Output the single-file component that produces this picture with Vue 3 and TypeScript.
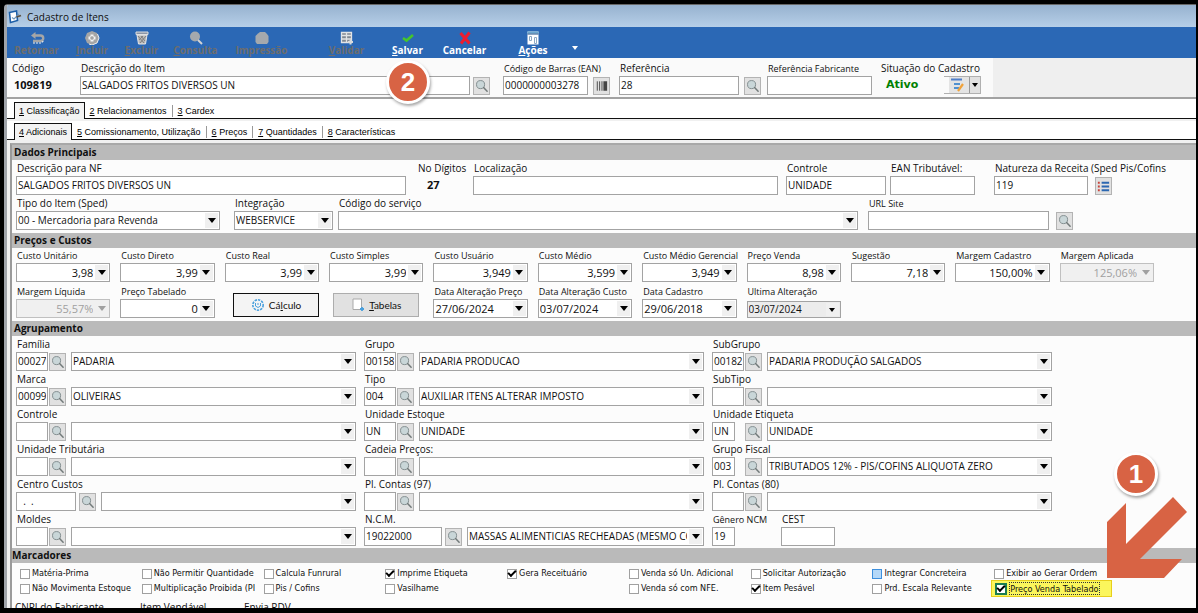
<script setup lang="ts">
import { ref } from 'vue'

interface PriceField {
  id: string
  label: string
  value: string
  disabled?: boolean
  date?: boolean
}

interface GroupField {
  id: string
  label: string
  code: string
  name: string
  size?: 'medium' | 'long' | 'short'
}

interface Flag {
  id: string
  label: string
  checked?: boolean
  tinted?: boolean
  marked?: boolean
}

const prices: PriceField[] = [
  { id: 'custo-unitario', label: 'Custo Unitário', value: '3,98' },
  { id: 'custo-direto', label: 'Custo Direto', value: '3,99' },
  { id: 'custo-real', label: 'Custo Real', value: '3,99' },
  { id: 'custo-simples', label: 'Custo Simples', value: '3,99' },
  { id: 'custo-usuario', label: 'Custo Usuário', value: '3,949' },
  { id: 'custo-medio', label: 'Custo Médio', value: '3,599' },
  { id: 'custo-gerencial', label: 'Custo Médio Gerencial', value: '3,949' },
  { id: 'preco-venda', label: 'Preço Venda', value: '8,98' },
  { id: 'sugestao', label: 'Sugestão', value: '7,18' },
  { id: 'margem-cadastro', label: 'Margem Cadastro', value: '150,00%' },
  { id: 'margem-aplicada', label: 'Margem Aplicada', value: '125,06%', disabled: true },
]

const margins: PriceField[] = [
  { id: 'margem-liquida', label: 'Margem Líquida', value: '55,57%', disabled: true },
  { id: 'preco-tabelado', label: 'Preço Tabelado', value: '0' },
]

const dates: PriceField[] = [
  { id: 'data-preco', label: 'Data Alteração Preço', value: '27/06/2024', date: true },
  { id: 'data-custo', label: 'Data Alteração Custo', value: '03/07/2024', date: true },
  { id: 'data-cadastro', label: 'Data Cadastro', value: '29/06/2018', date: true },
]

const groups: GroupField[] = [
  { id: 'familia', label: 'Família', code: '00027', name: 'PADARIA' },
  { id: 'grupo', label: 'Grupo', code: '00158', name: 'PADARIA PRODUCAO' },
  { id: 'subgrupo', label: 'SubGrupo', code: '00182', name: 'PADARIA PRODUÇÃO SALGADOS' },
  { id: 'marca', label: 'Marca', code: '00099', name: 'OLIVEIRAS' },
  { id: 'tipo', label: 'Tipo', code: '004', name: 'AUXILIAR ITENS ALTERAR IMPOSTO' },
  { id: 'subtipo', label: 'SubTipo', code: '', name: '' },
  { id: 'controle-grupo', label: 'Controle', code: '', name: '' },
  { id: 'un-estoque', label: 'Unidade Estoque', code: 'UN', name: 'UNIDADE' },
  { id: 'un-etiqueta', label: 'Unidade Etiqueta', code: 'UN', name: 'UNIDADE', size: 'short' },
  { id: 'un-tributaria', label: 'Unidade Tributária', code: '', name: '' },
  { id: 'cadeia', label: 'Cadeia Preços:', code: '', name: '' },
  { id: 'grupo-fiscal', label: 'Grupo Fiscal', code: '003', name: 'TRIBUTADOS 12% - PIS/COFINS ALIQUOTA ZERO', size: 'short' },
  { id: 'centro-custos', label: 'Centro Custos', code: '  .  .', name: '', size: 'medium' },
  { id: 'contas-97', label: 'Pl. Contas (97)', code: '', name: '' },
  { id: 'contas-80', label: 'Pl. Contas (80)', code: '', name: '' },
  { id: 'moldes', label: 'Moldes', code: '', name: '' },
  { id: 'ncm', label: 'N.C.M.', code: '19022000', name: 'MASSAS ALIMENTICIAS RECHEADAS (MESMO COZIDAS)', size: 'long' },
]

const flags = ref<Flag[]>([
  { id: 'f1', label: 'Matéria-Prima' },
  { id: 'f2', label: 'Não Permitir Quantidade' },
  { id: 'f3', label: 'Calcula Funrural' },
  { id: 'f4', label: 'Imprime Etiqueta', checked: true },
  { id: 'f5', label: 'Gera Receituário', checked: true },
  { id: 'f6', label: 'Venda só Un. Adicional' },
  { id: 'f7', label: 'Solicitar Autorização' },
  { id: 'f8', label: 'Integrar Concreteira', tinted: true },
  { id: 'f9', label: 'Exibir ao Gerar Ordem' },
  { id: 'f10', label: 'Não Movimenta Estoque' },
  { id: 'f11', label: 'Multiplicação Proibida (PI' },
  { id: 'f12', label: 'Pis / Cofins' },
  { id: 'f13', label: 'Vasilhame' },
])

const flagsTail = ref<Flag[]>([
  { id: 'f14', label: 'Venda só com NFE.' },
  { id: 'f15', label: 'Item Pesável', checked: true },
  { id: 'f16', label: 'Prd. Escala Relevante' },
  { id: 'f17', label: 'Preço Venda Tabelado', checked: true, marked: true },
])
</script>

<template>
  <div class="screen">
    <svg class="sprite" aria-hidden="true">
      <symbol id="lens" viewBox="0 0 16 16">
        <circle cx="7" cy="6.5" r="4.3" fill="#c9d6d8" stroke="#7f8a8c" />
        <path d="M10.2 9.7 14 13.6" stroke="#727a7a" stroke-width="1.6" stroke-linecap="round" />
      </symbol>
    </svg>

    <div class="window">
      <header class="titlebar">
        <svg class="app-icon" viewBox="0 0 14 14">
          <path d="M1.5 2.5 8.5 1l1 9.5-7 2z" fill="#fff" stroke="#1d5fa8" stroke-width="1.6" />
          <path d="M4 7.5 6 9l5-5" fill="none" stroke="#6f97bd" stroke-width="1.2" />
          <path d="M8.5 7 13 5.5" stroke="#5c5142" stroke-width="1.8" />
        </svg>
        <h1>Cadastro de Itens</h1>
      </header>

      <nav class="toolbar">
        <button class="tool w-retornar" disabled>
          <svg viewBox="0 0 16 14"><path d="M4 4.500h7.500a2.600 2.600 0 0 1 0 5.500H4" fill="none" stroke="#a6a6a6" stroke-width="2.400" /><path d="M6.500 1 2 4.500 6.500 8z" fill="#a6a6a6" /><path d="M4 12h8l2.500-2" fill="none" stroke="#f0f0f0" stroke-width="1.200" stroke-dasharray="2 1" /></svg>
          <span>Retornar</span>
        </button>
        <button class="tool w-incluir" disabled>
          <svg viewBox="0 0 16 14"><path d="M8 0 13 2l2 5-2 5-5 2-5-2-2-5 2-5z" fill="#a6a6a6" /><path d="M13.500 3 15 7l-2 5-5 2-3-1" fill="none" stroke="#eee" /><path d="M8 3.500v7M4.500 7h7" stroke="#f4f4f4" stroke-width="3" /><path d="M8 5v4M6 7h4" stroke="#8a8a8a" /></svg>
          <span><u>I</u>ncluir</span>
        </button>
        <button class="tool w-excluir" disabled>
          <svg viewBox="0 0 16 14"><path d="M2 1h12v2.500H2z" fill="#8a96a8" stroke="#dcdcdc" /><path d="M3 4h10l-1.500 9h-7z" fill="#b9b9b9" stroke="#e6e6e6" /><path d="m4 5 6 7M7 5l4 5M12 5l-6 7M9 5l-4 4" stroke="#808080" /></svg>
          <span><u>E</u>xcluir</span>
        </button>
        <button class="tool w-consulta" disabled>
          <svg viewBox="0 0 16 14"><circle cx="7" cy="5.500" r="5" fill="#a5a9ad" /><path d="m10 9 4 4" stroke="#d2d4d6" stroke-width="2" /></svg>
          <span><u>C</u>onsulta</span>
        </button>
        <button class="tool w-impressao" disabled>
          <svg viewBox="0 0 16 14"><path d="M4 2.500 6 1h5l2 2 1.500 2v6L13 13H3l-1.500-2V5z" fill="#a5a9ad" /></svg>
          <span>Impressão</span>
        </button>
        <span class="tool-gap" />
        <button class="tool w-validar" disabled>
          <svg viewBox="0 0 16 14"><path d="M2.500 1.500h10v10h-10zM7.500 1v10M3 4.500h9M3 8h9" fill="#808992" stroke="#e2e4e6" stroke-width="1.300" /><path d="M11.500 8.500v5M9 11h5" stroke="#d8dadc" stroke-width="2" /></svg>
          <span><u>V</u>alidar</span>
        </button>
        <button class="tool w-salvar">
          <svg viewBox="0 0 16 14"><path d="M3 7 6.500 9.500 13 4" fill="none" stroke="#45c62b" stroke-width="2.600" /></svg>
          <span><u>S</u>alvar</span>
        </button>
        <button class="tool w-cancelar">
          <svg viewBox="0 0 16 14"><path d="m3.500 2 9 10.500M12.500 1.500 4 12.500" stroke="#ee1c2e" stroke-width="3" /></svg>
          <span>Cancelar</span>
        </button>
        <button class="tool w-acoes">
          <svg viewBox="0 0 16 14"><path d="M2.500.5h11v13h-11z" fill="#fff" /><path d="M2.500.5h11v2h-11z" fill="#6aa7cf" /><path d="M2.500 3h11" stroke="#1a4d86" /><path d="M4.500 5.500h2v4h-2zM9.500 6.500h2v6h-2z" fill="#fff" stroke="#8da9c4" /></svg>
          <span><u>A</u>ções</span>
        </button>
        <button class="tool-more" aria-label="Mais ações"><span class="tri light" /></button>
      </nav>

      <section class="head">
        <div class="head-main">
          <div class="field w-code">
            <span class="caption">Código</span>
            <output class="strong">109819</output>
          </div>
          <div class="field grow">
            <label for="descricao">Descrição do Item</label>
            <div class="line">
              <input id="descricao" class="box grow" value="SALGADOS FRITOS DIVERSOS UN">
              <button class="icon-btn" aria-label="Pesquisar descrição"><svg><use href="#lens" /></svg></button>
            </div>
          </div>
          <div class="field small w-ean">
            <label for="ean">Código de Barras (EAN)</label>
            <div class="line wide-gap">
              <input id="ean" class="box grow" value="0000000003278">
              <button class="icon-btn" aria-label="Código de barras">
                <svg viewBox="0 0 16 16"><path d="M3.500 3v10M6 3v10" stroke="#444" /><path d="M8 3h1v10H8zM10 3h4v10h-4z" fill="#444" /></svg>
              </button>
            </div>
          </div>
          <div class="field w-ref">
            <label for="referencia">Referência</label>
            <div class="line wide-gap">
              <input id="referencia" class="box grow" value="28">
              <button class="icon-btn" aria-label="Pesquisar referência"><svg><use href="#lens" /></svg></button>
            </div>
          </div>
          <div class="field small w-fab">
            <label for="fabricante">Referência Fabricante</label>
            <input id="fabricante" class="box" value="">
          </div>
          <div class="field w-status">
            <span class="caption">Situação do Cadastro</span>
            <div class="line status">
              <output class="active">Ativo</output>
              <div class="split">
                <button class="split-main" aria-label="Alterar situação">
                  <svg viewBox="0 0 22 16"><path d="M5 2.500h11" stroke="#4f7fc9" stroke-width="2" /><path d="M8 7h6M8 11h5" stroke="#2176c9" stroke-width="1.600" /><path d="m12 14 5-7" stroke="#f0a23a" stroke-width="2.200" /></svg>
                </button>
                <button class="split-drop" aria-label="Opções de situação"><span class="tri small-tri" /></button>
              </div>
            </div>
          </div>
        </div>
      </section>

      <nav class="tabs">
        <a href="#" class="tab on"><u>1</u> Classificação</a>
        <a href="#" class="tab"><u>2</u> Relacionamentos</a>
        <a href="#" class="tab"><u>3</u> Cardex</a>
      </nav>
      <nav class="tabs second">
        <a href="#" class="tab on"><u>4</u> Adicionais</a>
        <a href="#" class="tab"><u>5</u> Comissionamento, Utilização</a>
        <a href="#" class="tab"><u>6</u> Preços</a>
        <a href="#" class="tab"><u>7</u> Quantidades</a>
        <a href="#" class="tab"><u>8</u> Características</a>
      </nav>

      <main class="panel">
        <h2>Dados Principais</h2>
        <section class="block top-pad">
          <div class="row">
            <div class="field f-nf">
              <label for="nf">Descrição para NF</label>
              <input id="nf" class="box" value="SALGADOS FRITOS DIVERSOS UN">
            </div>
            <div class="field f-digits">
              <span class="caption">No Dígitos</span>
              <output class="strong digits">27</output>
            </div>
            <div class="field f-local">
              <label for="local">Localização</label>
              <input id="local" class="box" value="">
            </div>
            <div class="field f-controle">
              <label for="controle">Controle</label>
              <input id="controle" class="box" value="UNIDADE">
            </div>
            <div class="field f-ean">
              <label for="ean-trib">EAN Tributável:</label>
              <input id="ean-trib" class="box" value="">
            </div>
            <div class="field f-natureza">
              <label for="natureza">Natureza da Receita (Sped Pis/Cofins</label>
              <div class="line list-gap">
                <input id="natureza" class="box w-nat" value="119">
                <button class="icon-btn" aria-label="Listar naturezas">
                  <svg viewBox="0 0 16 16"><path d="M2 4.500h2M2 8.500h2M2 12.500h2" stroke="#c8433a" stroke-width="2" /><path d="M6 4.500h8M6 8.500h8M6 12.500h8" stroke="#2b67b1" stroke-width="2" /></svg>
                </button>
              </div>
            </div>
          </div>
          <div class="row">
            <div class="field f-sped">
              <label for="sped">Tipo do Item (Sped)</label>
              <div class="combo"><select id="sped"><option>00 - Mercadoria para Revenda</option></select><span class="arrow"><i class="tri" /></span></div>
            </div>
            <div class="field f-integra">
              <label for="integra">Integração</label>
              <div class="combo"><select id="integra"><option>WEBSERVICE</option></select><span class="arrow"><i class="tri" /></span></div>
            </div>
            <div class="field f-servico">
              <label for="servico">Código do serviço</label>
              <div class="combo"><select id="servico"><option></option></select><span class="arrow"><i class="tri" /></span></div>
            </div>
            <div class="field small f-url">
              <label for="url">URL Site</label>
              <div class="line list-gap">
                <input id="url" class="box grow" value="">
                <button class="icon-btn" aria-label="Abrir site"><svg><use href="#lens" /></svg></button>
              </div>
            </div>
          </div>
        </section>

        <h2>Preços e Custos</h2>
        <section class="block prices">
          <div v-for="p in [...prices, ...margins]" :key="p.id" class="field small" :class="{ off: p.disabled }">
            <label :for="p.id">{{ p.label }}</label>
            <div class="combo">
              <input :id="p.id" class="num" :value="p.value" :disabled="p.disabled">
              <button class="arrow" :disabled="p.disabled" :aria-label="p.label"><i class="tri" /></button>
            </div>
          </div>
          <button class="action focus">
            <svg viewBox="0 0 14 14"><circle cx="7" cy="7" r="5.200" fill="none" stroke="#4aa0dd" stroke-width="1.600" stroke-dasharray="2.400 1" /><path d="M4.500 5v3l2.500 1.500L9.500 8V5M7 5v2" fill="none" stroke="#4aa0dd" /></svg>
            <span>Cá<u>l</u>culo</span>
          </button>
          <button class="action">
            <svg viewBox="0 0 14 14"><path d="M2 1h8.500v10.500H2z" fill="#fff" stroke="#a9a9a9" /><path d="M11 9v4M9 11h4" stroke="#4aa0dd" stroke-width="1.800" /></svg>
            <span><u>T</u>abelas</span>
          </button>
          <div v-for="p in dates" :key="p.id" class="field small">
            <label :for="p.id">{{ p.label }}</label>
            <div class="combo">
              <input :id="p.id" class="date" :value="p.value">
              <button class="arrow" :aria-label="p.label"><i class="tri" /></button>
            </div>
          </div>
          <div class="field small last-change">
            <label for="ultima">Ultima Alteração</label>
            <div class="combo grey"><select id="ultima"><option>03/07/2024</option></select><span class="arrow"><i class="tri small-tri" /></span></div>
          </div>
        </section>

        <h2>Agrupamento</h2>
        <section class="block groups">
          <div v-for="g in groups" :key="g.id" class="field" :class="g.size">
            <label :for="g.id">{{ g.label }}</label>
            <div class="lookup">
              <div class="slot"><input :id="g.id" class="box code" :value="g.code"></div>
              <button class="icon-btn" :aria-label="'Pesquisar ' + g.label"><svg><use href="#lens" /></svg></button>
              <div class="combo"><select :aria-label="g.label"><option>{{ g.name }}</option></select><span class="arrow"><i class="tri" /></span></div>
            </div>
          </div>
          <div class="pair">
            <div class="field small f-genero">
              <label for="genero">Gênero NCM</label>
              <input id="genero" class="box" value="19">
            </div>
            <div class="field f-cest">
              <label for="cest">CEST</label>
              <input id="cest" class="box" value="">
            </div>
          </div>
        </section>

        <h2 class="tight">Marcadores</h2>
        <section class="flags">
          <label v-for="f in flags" :key="f.id" class="flag" :class="{ tinted: f.tinted }">
            <input v-model="f.checked" type="checkbox">
            <span>{{ f.label }}</span>
          </label>
          <span />
          <label v-for="f in flagsTail" :key="f.id" class="flag" :class="{ marked: f.marked }">
            <input v-model="f.checked" type="checkbox">
            <span>{{ f.label }}</span>
          </label>
        </section>
        <div class="more">
          <span>CNPJ do Fabricante</span>
          <span>Item Vendável</span>
          <span>Envia PDV</span>
        </div>
      </main>
    </div>

    <div class="badge two">2</div>
    <div class="badge one">1</div>
    <svg class="pointer" viewBox="0 0 80 82"><path d="M0 25 19 6v41L66 0l14 15-47 47h42L57 81H0z" fill="#d86344" /></svg>
  </div>
</template>

<style>
html,
body,
#app {
  height: 100%;
}
body {
  background: #000;
  overflow: hidden;
}
</style>

<style scoped>
* {
  box-sizing: border-box;
}
.screen {
  position: relative;
  display: flex;
  height: 100%;
  padding: 4px 2px 5px 4px;
  background: #000;
  font-family: "Open Sans", "Noto Sans", sans-serif;
  font-size: 10px;
  line-height: 15px;
  color: #101010;
}
.sprite {
  position: absolute;
  width: 0;
  height: 0;
}
.window {
  flex: 1;
  min-width: 0;
  display: flex;
  flex-direction: column;
  overflow: hidden;
  border-top: 1px solid #666;
  border-left: 3px solid #a0a4aa;
  border-top-left-radius: 4px;
  background: #f0f0f0;
}
button {
  font: inherit;
  color: inherit;
  padding: 0;
  margin: 0;
}
input,
select {
  font: inherit;
  color: inherit;
  margin: 0;
  min-width: 0;
}
.titlebar {
  flex: none;
  height: 22px;
  display: flex;
  align-items: center;
  gap: 5px;
  padding: 2px 1px 0;
  background: linear-gradient(#97b2cf, #b6cfe8);
}
.app-icon {
  width: 14px;
  height: 14px;
}
h1 {
  margin: 0;
  font-size: 10px;
  font-weight: 400;
}
.toolbar {
  flex: none;
  height: 31px;
  display: flex;
  background: #2b68b5;
}
.tool {
  display: flex;
  flex-direction: column;
  align-items: center;
  border: 0;
  padding-top: 4px;
  background: none;
  color: #fff;
  font-weight: 700;
  font-size: 10px;
}
.tool svg {
  width: 16px;
  height: 14px;
  flex: none;
}
.tool span {
  line-height: 11px;
}
.tool:disabled {
  color: #6d6d6d;
}
.w-retornar { width: 59px; }
.w-incluir { width: 52px; }
.w-excluir { width: 47px; }
.w-consulta { width: 61px; }
.w-impressao { width: 71px; }
.tool-gap { width: 23px; }
.w-validar { width: 53px; margin-right: 8px; }
.w-salvar { width: 53px; }
.w-cancelar { width: 61px; margin-right: 12px; }
.w-acoes { width: 52px; }
.tool-more {
  width: 32px;
  border: 0;
  padding-top: 10px;
  background: none;
  display: grid;
  place-items: center;
}
.tri {
  display: block;
  width: 0;
  height: 0;
  border: 4px solid transparent;
  border-top: 5px solid #000;
  border-bottom: 0;
}
.tri.small-tri {
  border-width: 4px 3px 0;
}
.tri.light {
  border-width: 4px 3px 0;
  border-top-color: #fff;
}
.head {
  flex: none;
  height: 41px;
  border-bottom: 2px solid #a2a2a2;
  background: #efefef;
}
.head-main {
  display: flex;
  height: 100%;
  margin-right: 203px;
  padding: 3px 12px 0 4px;
  background: #fafafa;
}
.field {
  display: flex;
  flex-direction: column;
  min-width: 0;
}
.field > label,
.caption {
  height: 15px;
  padding-left: 1px;
  white-space: nowrap;
}
.field.small > label {
  font-size: 9px;
}
.grow {
  flex: 1;
}
.line {
  display: flex;
  align-items: center;
  gap: 3px;
}
.wide-gap {
  gap: 5px;
}
.list-gap {
  gap: 7px;
}
.box {
  height: 19px;
  width: 100%;
  padding: 0 1px 2px;
  border: 1px solid #a3a3a3;
  border-radius: 0;
  background: #fff;
}
.icon-btn {
  flex: none;
  width: 17px;
  height: 18px;
  border: 1px solid #b3b3b3;
  background: #e1e1e1;
  display: grid;
  place-items: center;
}
.icon-btn svg {
  width: 15px;
  height: 16px;
}
.strong {
  font-size: 11px;
  font-weight: 700;
  line-height: 18px;
  padding-left: 3px;
}
.w-code { width: 69px; }
.w-ean { width: 107px; margin: 0 9px 0 13px; }
.w-ref { width: 142px; margin-right: 6px; }
.w-fab { width: 105px; margin-right: 8px; }
.w-status { width: 101px; }
.status {
  justify-content: space-between;
}
.active {
  padding-left: 6px;
  font: 700 11px/18px "DejaVu Sans", sans-serif;
  color: #008000;
}
.split {
  display: flex;
  height: 18px;
  border: 1px solid #b0b0b0;
  border-left: 0;
}
.split-main {
  width: 25px;
  border: 0;
  background: linear-gradient(90deg, #fafafa, #fafafa 5px, #e4e4e4 5px);
  display: grid;
  place-items: center;
}
.split-main svg {
  width: 22px;
  height: 16px;
}
.split-drop {
  width: 11px;
  border: 0;
  border-left: 1px solid #999;
  background: #e1e1e1;
  display: grid;
  place-items: center;
}
.tabs {
  flex: none;
  display: flex;
  align-items: flex-end;
  height: 20px;
  padding-left: 7px;
  border-bottom: 1px solid #111;
  background: #fff;
  font-family: "Liberation Sans", Arial, sans-serif;
  font-size: 9px;
}
.tabs.second {
  height: 21px;
  border-top: 2px solid #f0f0f0;
}
.tab {
  height: 12px;
  margin-bottom: 1px;
  padding: 0 5px;
  line-height: 12px;
  color: #000;
  text-decoration: none;
  white-space: nowrap;
  border-right: 1px solid #999;
}
.tab:last-child {
  border-right: 0;
}
.tab.on {
  height: 17px;
  margin-bottom: -1px;
  padding: 2px 4px 0;
  border: 1px solid #111;
  border-bottom: 0;
  background: #f3f3f3;
}
.panel {
  flex: 1;
  min-height: 0;
  overflow: hidden;
  margin: 3px 0 0 3px;
  border-top: 2px solid #a8a8a8;
  border-left: 2px solid #9a9a9a;
  background: #fcfcfc;
}
h2 {
  height: 15px;
  margin: 0;
  padding-left: 2px;
  background: #bababa;
  font-size: 10px;
  font-weight: 700;
}
h2.tight {
  padding-left: 0;
}
.block {
  padding: 0 4px 3px;
}
.top-pad {
  padding-top: 1px;
}
.row {
  display: flex;
  height: 34px;
}
.row + .row {
  margin-top: 1px;
}
.f-nf { flex: 390; margin-right: 11px; }
.f-digits { width: 49px; margin-right: 7px; }
.digits { padding-left: 10px; }
.f-local { flex: 305; margin-right: 8px; }
.f-controle { width: 100px; margin-right: 4px; }
.f-ean { width: 85px; margin-right: 19px; }
.f-natureza { width: 198px; }
.w-nat { width: 94px; }
.f-sped { width: 204px; margin-right: 14px; }
.f-integra { width: 99px; margin-right: 5px; }
.f-servico { flex: 520; margin-right: 10px; }
.f-url { width: 205px; margin-right: 119px; }
.combo {
  display: flex;
  height: 19px;
  min-width: 0;
  border: 1px solid #a3a3a3;
  background: #fff;
}
.combo select,
.combo input {
  flex: 1;
  width: 0;
  height: 17px;
  padding: 0 1px;
  border: 0;
  border-radius: 0;
  background: none;
  appearance: none;
  text-overflow: clip;
}
.combo select {
  padding-bottom: 1px;
}
.arrow {
  flex: none;
  width: 13px;
  margin: 1px;
  border: 0;
  background: #f0f0f0;
  display: grid;
  place-items: center;
}
.combo .num,
.combo .date {
  font-size: 11px;
}
.combo .num {
  text-align: right;
}
.prices {
  display: grid;
  grid-template-columns: repeat(11, minmax(0, 1fr));
  gap: 2px 10px;
  padding-right: 42px;
}
.off .combo {
  background: #f0f0f0;
  border-color: #c0c0c0;
  color: #a0a0a0;
}
.off .tri {
  border-top-color: #a0a0a0;
}
.action {
  align-self: end;
  justify-self: center;
  width: 86px;
  height: 24px;
  margin-bottom: 1px;
  display: flex;
  align-items: center;
  justify-content: center;
  gap: 4px;
  border: 1px solid #adadad;
  background: #e1e1e1;
  font-family: Lato, sans-serif;
}
.action svg {
  width: 14px;
  height: 14px;
}
.action.focus {
  justify-self: end;
  border-color: #111;
  background: #f4f4f4;
}
.last-change {
  justify-content: space-between;
}
.combo.grey {
  height: 17px;
  background: #ececec;
}
.combo.grey select {
  height: 15px;
}
.groups {
  display: grid;
  grid-template-columns: repeat(3, minmax(0, 1fr));
  gap: 1px 8px;
  padding: 1px 144px 2px 4px;
}
.lookup {
  display: flex;
  align-items: center;
}
.lookup .combo {
  flex: 1;
  margin-left: 5px;
}
.slot {
  width: 33px;
}
.slot .box {
  width: 32px;
  display: block;
}
.code {
  white-space: pre;
}
.short .slot .box {
  width: 23px;
}
.medium .slot {
  width: 63px;
}
.medium .slot .box {
  width: 60px;
}
.long .slot {
  width: 81px;
}
.long .slot .box {
  width: 78px;
}
.pair {
  display: flex;
  gap: 13px;
}
.f-genero { width: 56px; }
.f-genero .box { width: 23px; }
.f-cest { width: 54px; }
.flags {
  display: grid;
  grid-template-columns: repeat(9, minmax(0, 1fr));
  padding: 3px 80px 0 8px;
  font-family: "DejaVu Sans Condensed", "Open Sans", sans-serif;
  font-size: 9px;
}
.flag {
  display: flex;
  align-items: center;
  gap: 2px;
  height: 15px;
  min-width: 0;
}
.flag span {
  white-space: nowrap;
}
.flag input {
  flex: none;
  width: 10px;
  height: 10px;
  border: 1px solid #a0a0a0;
  background: #fff;
  appearance: none;
  display: grid;
  place-items: center;
}
.flag input:checked::before {
  content: "";
  width: 6px;
  height: 3px;
  margin-bottom: 2px;
  border-left: 2px solid #000;
  border-bottom: 2px solid #000;
  transform: rotate(-45deg);
}
.tinted input {
  border-color: #3d8fdd;
  background: #b4d8f8;
}
.marked {
  width: 121px;
  height: 17px;
  margin: -1px 0 -1px -3px;
  padding-left: 3px;
  border: 1px solid #e8cf1c;
  background: #fbf65c;
}
.flag.marked input {
  width: 12px;
  height: 12px;
  border: 2px solid #1c7d50;
}
.marked span {
  height: 13px;
  line-height: 12px;
  border: 1px dotted #333;
}
.more {
  display: flex;
  padding: 4px 0 0 3px;
}
.more span {
  width: 104px;
}
.more span:first-child {
  width: 125px;
}
.badge {
  position: absolute;
  width: 44px;
  height: 44px;
  border: 3px solid #fff;
  border-radius: 50%;
  background: #d86344;
  box-shadow: 1px 2px 3px rgba(0, 0, 0, 0.35);
  color: #fff;
  font: 700 26px/38px "Liberation Sans", Arial, sans-serif;
  text-align: center;
}
.two {
  left: 386px;
  top: 60px;
}
.one {
  right: 40px;
  top: 452px;
}
.pointer {
  position: absolute;
  right: 11px;
  top: 497px;
  width: 80px;
  height: 82px;
}
</style>
